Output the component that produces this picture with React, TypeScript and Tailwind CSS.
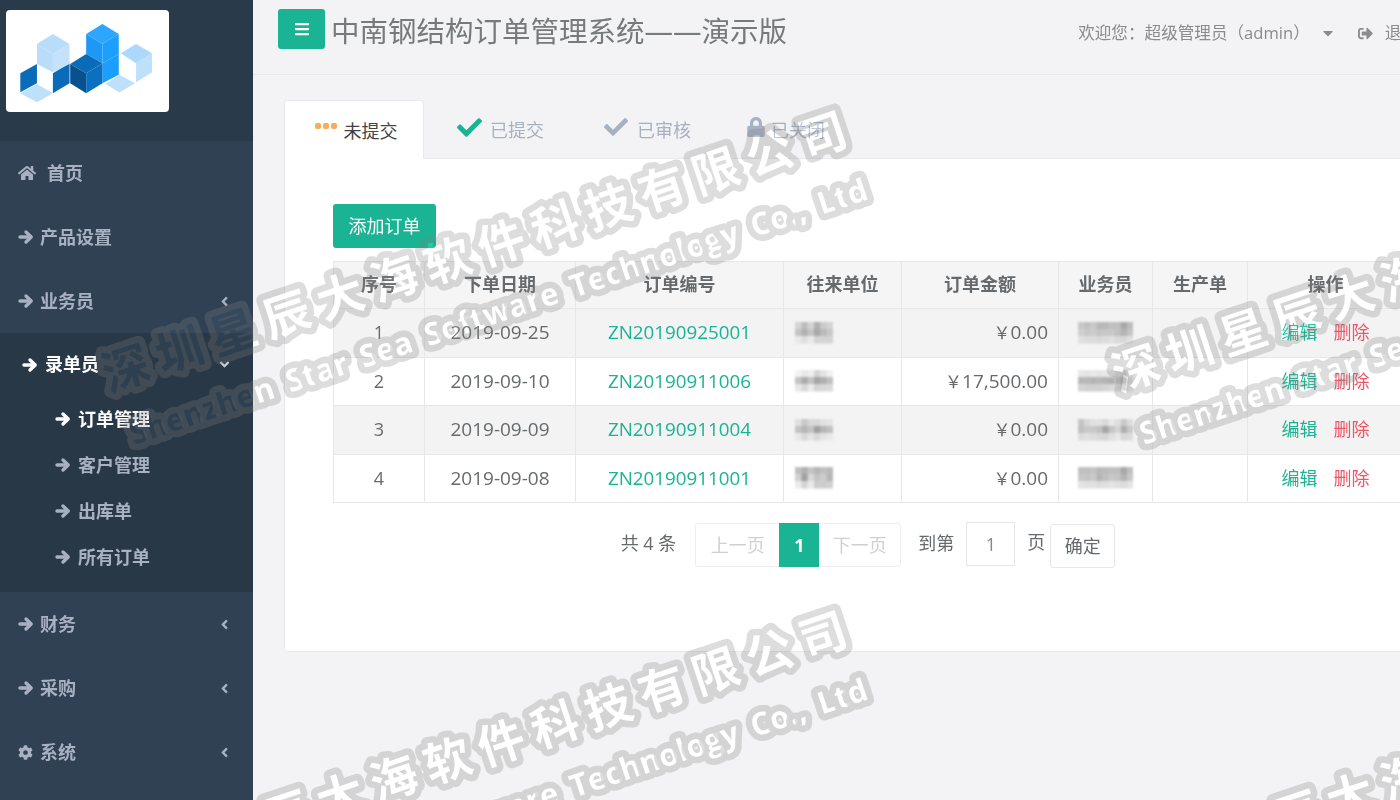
import React from "react";
import {
  FaAngleDown,
  FaAngleLeft,
  FaBars,
  FaCaretDown,
  FaCheck,
  FaCog,
  FaHome,
  FaLock,
  FaSignOutAlt,
} from "react-icons/fa";

const Logo = () => (
  <svg viewBox="17 28 490 306" className="h-full w-full">
    <polygon points="60,278 110,250 158,278 110,305" fill="#bfe0fb" />
    <polygon points="316,250 358,222 405,248 358,276" fill="#bfe0fb" />
    <polygon points="60,218 110,190 110,248 60,275" fill="#0a6bb8" />
    <polygon points="158,218 208,188 208,248 158,278" fill="#0a6bb8" />
    <polygon points="110,130 158,100 208,130 158,160" fill="#b9dcfa" />
    <polygon points="110,130 158,160 158,215 110,190" fill="#b9dcfa" />
    <polygon points="158,160 208,130 208,190 158,215" fill="#c4e2fb" />
    <polygon points="362,158 408,130 456,158 408,188" fill="#acd8fb" />
    <polygon points="408,188 456,158 456,215 408,245" fill="#bde0fb" />
    <polygon points="258,100 307,70 356,100 307,130" fill="#2ea6ff" />
    <polygon points="258,100 307,130 307,188 258,160" fill="#1e98f5" />
    <polygon points="307,130 356,100 356,160 307,188" fill="#1ba0ff" />
    <polygon points="307,188 356,160 356,222 307,248" fill="#1a9fff" />
    <polygon points="210,190 258,160 307,188 258,218" fill="#0a6bb8" />
    <polygon points="210,190 258,218 258,278 210,248" fill="#07518f" />
    <polygon points="258,218 307,188 307,248 258,278" fill="#0b6fc2" />
  </svg>
);

const Arrow = ({ className }: { className: string }) => (
  <svg viewBox="0 0 16 16" className={className} fill="none" stroke="currentColor" strokeWidth="3.4" strokeLinejoin="round" strokeLinecap="round">
    <path d="M2 8H12.5" />
    <path d="M8 3L13.2 8L8 13" />
  </svg>
);

const Mosaic = ({ rows, w }: { rows: string[][]; w: number }) => (
  <svg width={w} height={22} className="blur-[0.8px]">
    {rows.map((r, y) =>
      r.map((c, x) => (
        <rect key={`${x}-${y}`} x={x * (w / r.length)} y={y * 7} width={w / r.length + 0.5} height={7.5} fill={c} />
      ))
    )}
  </svg>
);

const companies = [
  [
    ["#d4d4d4", "#bcbcbc", "#d4d4d4", "#b0b0b0", "#cacaca", "#d4d4d4"],
    ["#c4c4c4", "#b0b0b0", "#c4c4c4", "#a8a8a8", "#bababa", "#c8c8c8"],
    ["#e8e8e8", "#dedede", "#eaeaea", "#d4d4d4", "#d4d4d4", "#d4d4d4"],
  ],
  [
    ["#f4f4f4", "#e8e8e8", "#eeeeee", "#d4d4d4", "#e4e4e4", "#f0f0f0"],
    ["#c4c4c4", "#acacac", "#c4c4c4", "#a6a6a6", "#b0b0b0", "#c0c0c0"],
    ["#e8e8e8", "#d8d8d8", "#eaeaea", "#d4d4d4", "#d8d8d8", "#dadada"],
  ],
  [
    ["#e0e0e0", "#c8c8c8", "#d8d8d8", "#d8d8d8", "#e0e0e0", "#e4e4e4"],
    ["#c4c4c4", "#b6b6b6", "#c4c4c4", "#a0a0a0", "#b6b6b6", "#c0c0c0"],
    ["#e8e8e8", "#d8d8d8", "#e4e4e4", "#d8d8d8", "#e4e4e4", "#e8e8e8"],
  ],
  [
    ["#c0c0c0", "#b0b0b0", "#c4c4c4", "#b6b6b6", "#c0c0c0", "#bababa"],
    ["#d0d0d0", "#a0a0a0", "#d8d8d8", "#c4c4c4", "#cccccc", "#b6b6b6"],
    ["#ececec", "#d4d4d4", "#eaeaea", "#cccccc", "#cccccc", "#d0d0d0"],
  ],
];

const staff = [
  [
    ["#c8c8c8", "#c0c0c0", "#c8c8c8", "#b8b8b8", "#b8b8b8", "#c0c0c0", "#c0c0c0", "#a8a8a8", "#bcbcbc"],
    ["#d0d0d0", "#c8c8c8", "#cccccc", "#c4c4c4", "#c8c8c8", "#c8c8c8", "#c0c0c0", "#b4b4b4", "#c4c4c4"],
    ["#e0e0e0", "#dcdcdc", "#dcdcdc", "#d8d8d8", "#dcdcdc", "#e0e0e0", "#d8d8d8", "#d8d8d8", "#e0e0e0"],
  ],
  [
    ["#e8e8e8", "#e4e4e4", "#e8e8e8", "#e4e4e4", "#e8e8e8", "#e8e8e8", "#d8d8d8", "#cccccc", "#eeeeee"],
    ["#b8b8b8", "#b8b8b8", "#b4b4b4", "#b8b8b8", "#b4b4b4", "#b0b0b0", "#c0c0c0", "#a8a8a8", "#dcdcdc"],
    ["#d4d4d4", "#d0d0d0", "#d0d0d0", "#d0d0d0", "#d4d4d4", "#d8d8d8", "#dcdcdc", "#c0c0c0", "#e8e8e8"],
  ],
  [
    ["#c4c4c4", "#d8d8d8", "#e0e0e0", "#e0e0e0", "#d8d8d8", "#e8e8e8", "#e0e0e0", "#c8c8c8", "#dcdcdc"],
    ["#c0c0c0", "#c8c8c8", "#c8c8c8", "#c0c0c0", "#a4a4a4", "#c4c4c4", "#d4d4d4", "#b0b0b0", "#c8c8c8"],
    ["#dcdcdc", "#e0e0e0", "#dcdcdc", "#d8d8d8", "#d4d4d4", "#e0e0e0", "#e8e8e8", "#d8d8d8", "#dcdcdc"],
  ],
  [
    ["#c0c0c0", "#c0c0c0", "#c4c4c4", "#b8b8b8", "#bcbcbc", "#c0c0c0", "#c0c0c0", "#a8a8a8", "#c0c0c0"],
    ["#c8c8c8", "#c4c4c4", "#c8c8c8", "#b4b4b4", "#c0c0c0", "#c8c8c8", "#c4c4c4", "#b4b4b4", "#c8c8c8"],
    ["#e4e4e4", "#e0e0e0", "#e0e0e0", "#dcdcdc", "#e0e0e0", "#e4e4e4", "#e0e0e0", "#dcdcdc", "#e4e4e4"],
  ],
];

const orders = [
  ["1", "2019-09-25", "ZN20190925001", "0.00"],
  ["2", "2019-09-10", "ZN20190911006", "17,500.00"],
  ["3", "2019-09-09", "ZN20190911004", "0.00"],
  ["4", "2019-09-08", "ZN20190911001", "0.00"],
];

const NavRow = ({ icon, label, chevron }: { icon: React.ReactNode; label: string; chevron?: boolean }) => (
  <div className="flex h-16 items-center pl-[18px] pr-[21px] text-[18px] font-bold text-[#a7b1c2]">
    {icon}
    <span>{label}</span>
    {chevron && <FaAngleLeft className="ml-auto text-[15px]" />}
  </div>
);

const arrow = <Arrow className="mr-[6px] h-[16px] w-[16px]" />;

const SubRow = ({ label, active }: { label: string; active?: boolean }) => (
  <div className={`flex h-[46px] items-center pl-[55px] text-[18px] font-bold ${active ? "text-white" : "text-[#a7b1c2]"}`}>
    <Arrow className="mr-[7px] h-[16px] w-[16px]" />
    <span>{label}</span>
  </div>
);

const th = "border border-[#e7e7e7] pb-[2px] font-bold";
const td = "border border-[#e7e7e7] font-normal";

const marks = [
  [0, 0],
  [1010, 0],
  [0, 500],
  [1010, 500],
];

const MarkText = ({ dx, dy, fill, stroke }: { dx: number; dy: number; fill: string; stroke?: string }) => (
  <g transform={`translate(${dx} ${dy})`} fill={fill} stroke={stroke} strokeWidth={stroke ? 13 : 0} strokeLinejoin="round" className="[paint-order:stroke]">
    <text
      transform="translate(109 392) rotate(-18.5)"
      textLength={782}
      fontSize={47}
      fontWeight={700}
      fontFamily="'Noto Sans CJK SC', sans-serif"
    >
      深圳星辰大海软件科技有限公司
    </text>
    <text
      transform="translate(134 445) rotate(-18.5)"
      textLength={776}
      fontSize={31}
      fontWeight={700}
      wordSpacing={6}
      fontFamily="'Open Sans', sans-serif"
    >
      Shenzhen Star Sea Software Technology Co., Ltd
    </text>
  </g>
);

export default function App() {
  return (
    <div className="relative flex h-[800px] w-[1400px] overflow-hidden bg-[#f3f3f5] font-['Open_Sans','Noto_Sans_CJK_SC',sans-serif] text-[18px] text-[#676a6c]">
      <aside className="flex w-[253px] shrink-0 flex-col bg-[#2f4153]">
        <div className="h-[141px] shrink-0 bg-[#293a4b] pl-[6px] pt-[10px]">
          <div className="h-[102px] w-[163px] rounded bg-white">
            <Logo />
          </div>
        </div>
        <div className="h-[192px] shrink-0">
          <NavRow icon={<FaHome className="mr-[11px] w-[18px] text-[16px]" />} label="首页" />
          <NavRow icon={arrow} label="产品设置" />
          <NavRow icon={arrow} label="业务员" chevron />
        </div>
        <div className="h-[259px] shrink-0 bg-[#293846]">
          <div className="flex h-[63px] items-center pl-[22px] pr-[21px] text-[18px] font-bold text-white">
            <Arrow className="mr-[7px] h-[16px] w-[16px]" />
            <span>录单员</span>
            <FaAngleDown className="ml-auto text-[15px] text-[#c4cbd6]" />
          </div>
          <SubRow label="订单管理" active />
          <SubRow label="客户管理" />
          <SubRow label="出库单" />
          <SubRow label="所有订单" />
        </div>
        <NavRow icon={arrow} label="财务" chevron />
        <NavRow icon={arrow} label="采购" chevron />
        <NavRow icon={<FaCog className="mr-[7px] w-[15px] text-[15px]" />} label="系统" chevron />
      </aside>

      <main className="flex min-w-0 flex-1 flex-col">
        <header className="flex h-[75px] shrink-0 items-start border-b border-[#e7eaec] pl-[25px]">
          <div className="mt-[9px] flex h-[40px] w-[47px] items-center justify-center rounded-[3px] bg-[#1ab394] text-white">
            <FaBars className="text-[16px]" />
          </div>
          <h1 className="ml-[6px] mt-[9px] whitespace-nowrap text-[28.5px] font-normal leading-[44px] text-[#777a7c]">
            中南钢结构订单管理系统——演示版
          </h1>
          <div className="ml-auto mr-[-18px] mt-[21px] flex shrink-0 items-center whitespace-nowrap text-[16.6px] leading-[24px] text-[#8b8b8b]">
            <span>{"欢迎您\uFF1A超级管理员\uFF08admin\uFF09"}</span>
            <FaCaretDown className="ml-[10px] text-[16px]" />
            <FaSignOutAlt className="ml-[22px] text-[15px]" />
            <span className="ml-[12px]">退出</span>
          </div>
        </header>

        <div className="pl-[31px] pt-[25px]">
          <div className="flex h-[59px] items-stretch">
            <div className="relative z-10 flex h-[59px] w-[140px] items-center justify-center gap-[7px] rounded-t border border-b-0 border-[#e7eaec] bg-white pl-[4px] pt-[2px] text-[#444444]">
              <span className="mb-[11px] flex gap-[2px]">
                <i className="h-[6px] w-[6px] rounded-[2px] bg-[#f8ac59]" />
                <i className="h-[6px] w-[6px] rounded-[2px] bg-[#f8ac59]" />
                <i className="h-[6px] w-[6px] rounded-[2px] bg-[#f8ac59]" />
              </span>
              <span>未提交</span>
            </div>
            <div className="flex items-center pl-[33px] pr-[26px] pt-[2px] text-[#a7b1c2]">
              <FaCheck className="mb-[7px] mr-[8px] text-[25px] text-[#1ab394]" />
              <span>已提交</span>
            </div>
            <div className="flex items-center pl-[34px] pr-[26px] pt-[2px] text-[#a7b1c2]">
              <FaCheck className="mb-[7px] mr-[9px] text-[24px]" />
              <span>已审核</span>
            </div>
            <div className="flex items-center pl-[29px] pt-[2px] text-[#a7b1c2]">
              <FaLock className="mb-[8px] mr-[5px] text-[20px]" />
              <span>已关闭</span>
            </div>
          </div>
          <section className="-mr-10 -mt-px h-[494px] rounded-b border border-[#e7eaec] bg-white pl-[48px] pt-[45px]">
            <div className="flex h-[44px] w-[103px] items-center justify-center rounded-[3px] bg-[#1ab394] text-white">
              添加订单
            </div>
            <div className="mt-[13px] w-[1070px]">
              <table className="w-full table-fixed border-collapse text-center">
                <colgroup>
                  <col className="w-[91px]" />
                  <col className="w-[151px]" />
                  <col className="w-[208px]" />
                  <col className="w-[118px]" />
                  <col className="w-[157px]" />
                  <col className="w-[94px]" />
                  <col className="w-[95px]" />
                  <col className="w-[156px]" />
                </colgroup>
                <thead>
                  <tr className="h-[47px] bg-[#f5f5f6]">
                    {["序号", "下单日期", "订单编号", "往来单位", "订单金额", "业务员", "生产单", "操作"].map((h) => (
                      <th key={h} className={th}>
                        {h}
                      </th>
                    ))}
                  </tr>
                </thead>
                <tbody>
                  {orders.map((o, i) => (
                    <tr key={o[0]} className={`h-[48.5px] ${i % 2 === 0 ? "bg-[#f3f3f3]" : "bg-white"}`}>
                      <td className={td}>{o[0]}</td>
                      <td className={`${td} pb-px text-[19px]`}>{o[1]}</td>
                      <td className={`${td} pb-px text-[18.8px] text-[#1ab394]`}>{o[2]}</td>
                      <td className={`${td} pl-[11px]`}>
                        <div className="flex">
                          <Mosaic rows={companies[i]} w={38} />
                        </div>
                      </td>
                      <td className={`${td} pb-px pr-[10px] text-right text-[19px]`}>
                        <span className="text-[17px]">{"\uFFE5"}</span>
                        {o[3]}
                      </td>
                      <td className={`${td} pl-[19px]`}>
                        <div className="flex">
                          <Mosaic rows={staff[i]} w={55} />
                        </div>
                      </td>
                      <td className={td}></td>
                      <td className={td}>
                        <span className="text-[#1ab394]">编辑</span>
                        <span className="ml-[16px] text-[#ed5565]">删除</span>
                      </td>
                    </tr>
                  ))}
                </tbody>
              </table>
              <div className="mt-[20px] flex items-start justify-center text-[18px]">
                <span className="mr-[19px] mt-[7px] leading-[26px]">共 4 条</span>
                <div className="flex h-[44px] w-[206px] items-center rounded-[3px] border border-[#eeeeee] text-[#d0d0d0]">
                  <span className="w-[83px] text-center">上一页</span>
                  <span className="flex h-[44px] w-[40px] items-center justify-center bg-[#1ab394] font-bold text-white">1</span>
                  <span className="flex-1 text-center">下一页</span>
                </div>
                <span className="ml-[17px] mt-[7px] leading-[26px]">到第</span>
                <span className="ml-[12px] -mt-px flex h-[44px] w-[49px] items-center justify-center border border-[#e5e6e7] text-[#888888]">1</span>
                <span className="ml-[12px] mt-[6px] leading-[26px]">页</span>
                <span className="ml-[5px] mt-px flex h-[44px] w-[65px] items-center justify-center rounded-[3px] border border-[#e7e7e7]">确定</span>
              </div>
            </div>
          </section>
        </div>
      </main>

      <svg width="1400" height="800" className="pointer-events-none absolute left-0 top-0 mix-blend-color-dodge">
        {marks.map(([x, y]) => (
          <MarkText key={`f${x}${y}`} dx={x} dy={y} fill="#1c1c1c" />
        ))}
      </svg>
      <svg width="1400" height="800" className="pointer-events-none absolute left-0 top-0">
        <defs>
          <mask id="wm" maskUnits="userSpaceOnUse" x="0" y="0" width="1400" height="800">
            {marks.map(([x, y]) => (
              <MarkText key={`m${x}${y}`} dx={x} dy={y} fill="#000000" stroke="#ffffff" />
            ))}
          </mask>
        </defs>
        <rect width="1400" height="800" fill="#808080" fillOpacity="0.27" mask="url(#wm)" />
      </svg>
    </div>
  );
}
